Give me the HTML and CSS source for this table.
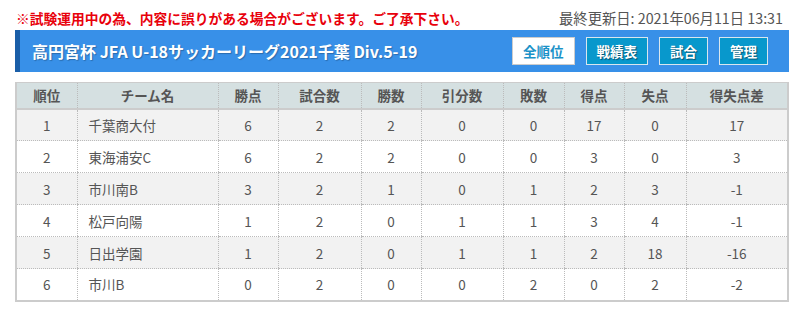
FILE: index.html
```html
<!DOCTYPE html>
<html lang="ja">
<head>
<meta charset="utf-8">
<link rel="stylesheet" href="styles.css">
</head>
<body>
<div class="page">
  <div class="topline">
    <span class="notice">※試験運用中の為、内容に誤りがある場合がございます。ご了承下さい。</span>
    <span class="updated">最終更新日: 2021年06月11日 13:31</span>
  </div>
  <div class="titlebar">
    <h1 class="title">高円宮杯 JFA U-18サッカーリーグ2021千葉 Div.5-19</h1>
    <nav class="btns">
      <a class="btn active">全順位</a>
      <a class="btn">戦績表</a>
      <a class="btn">試合</a>
      <a class="btn">管理</a>
    </nav>
  </div>
  <table class="standings">
    <colgroup>
      <col style="width:61px"><col style="width:141px"><col style="width:60px"><col style="width:83px"><col style="width:60px"><col style="width:82px"><col style="width:61px"><col style="width:60px"><col style="width:62px"><col>
    </colgroup>
    <thead>
      <tr><th>順位</th><th>チーム名</th><th>勝点</th><th>試合数</th><th>勝数</th><th>引分数</th><th>敗数</th><th>得点</th><th>失点</th><th>得失点差</th></tr>
    </thead>
    <tbody>
      <tr><td>1</td><td class="team">千葉商大付</td><td>6</td><td>2</td><td>2</td><td>0</td><td>0</td><td>17</td><td>0</td><td>17</td></tr>
      <tr><td>2</td><td class="team">東海浦安C</td><td>6</td><td>2</td><td>2</td><td>0</td><td>0</td><td>3</td><td>0</td><td>3</td></tr>
      <tr><td>3</td><td class="team">市川南B</td><td>3</td><td>2</td><td>1</td><td>0</td><td>1</td><td>2</td><td>3</td><td>-1</td></tr>
      <tr><td>4</td><td class="team">松戸向陽</td><td>1</td><td>2</td><td>0</td><td>1</td><td>1</td><td>3</td><td>4</td><td>-1</td></tr>
      <tr><td>5</td><td class="team">日出学園</td><td>1</td><td>2</td><td>0</td><td>1</td><td>1</td><td>2</td><td>18</td><td>-16</td></tr>
      <tr><td>6</td><td class="team">市川B</td><td>0</td><td>2</td><td>0</td><td>0</td><td>2</td><td>0</td><td>2</td><td>-2</td></tr>
    </tbody>
  </table>
</div>
</body>
</html>
```

FILE: styles.css
```css
* { box-sizing: border-box; }
html, body { margin: 0; padding: 0; background: #fff; }
body {
  font-family: "Noto Sans CJK JP", "Noto Sans", sans-serif;
  color: #555;
}
.page {
  width: 774px;
  margin-left: 15px;
  padding-top: 5px;
}
.topline {
  display: flex;
  justify-content: space-between;
  align-items: center;
  height: 25px;
  padding-right: 6px;
}
.notice {
  color: #e8000b;
  font-weight: bold;
  font-size: 13.75px;
  margin-left: 1px;
}
.updated {
  color: #555;
  font-size: 14.3px;
}
.titlebar {
  display: flex;
  align-items: center;
  justify-content: space-between;
  height: 42px;
  background: #3890e8;
  border-left: 5px solid #1a5ea8;
  padding: 0 21px 0 12px;
}
.title {
  margin: 0;
  color: #fff;
  font-size: 16px;
  font-weight: bold;
  text-shadow: 1px 1px 1px rgba(0,0,0,0.25);
}
.btns {
  display: flex;
  gap: 11px;
}
.btn {
  display: flex;
  align-items: center;
  justify-content: center;
  height: 28px;
  padding: 0 10px;
  background: #0898cc;
  border: 1px solid #d8e6ee;
  color: #fff;
  font-size: 13.5px;
  font-weight: bold;
  text-shadow: 1px 1px 1px rgba(0,0,0,0.45);
}
.btn.active {
  background: #fff;
  color: #1a92c8;
  border-color: #ccc;
  text-shadow: none;
}
.standings {
  margin-top: 10px;
  width: 774px;
  border-collapse: collapse;
  table-layout: fixed;
  border: 2px solid #ccc;
  border-top: 1px solid #ccc;
  font-size: 13.5px;
}
.standings th {
  height: 26px;
  background: #d5e0e1;
  color: #555;
  font-weight: bold;
  border-left: 1px dotted #bbb;
  border-bottom: 2px solid #ccc;
  padding: 0;
}
.standings td {
  height: 32px;
  text-align: center;
  border-left: 1px dotted #bbb;
  border-bottom: 1px dotted #bbb;
  padding: 0;
  color: #555;
}
.standings tbody tr:nth-child(odd) td { background: #f2f2f2; }
.standings td.team {
  text-align: left;
  padding-left: 11px;
}
```
